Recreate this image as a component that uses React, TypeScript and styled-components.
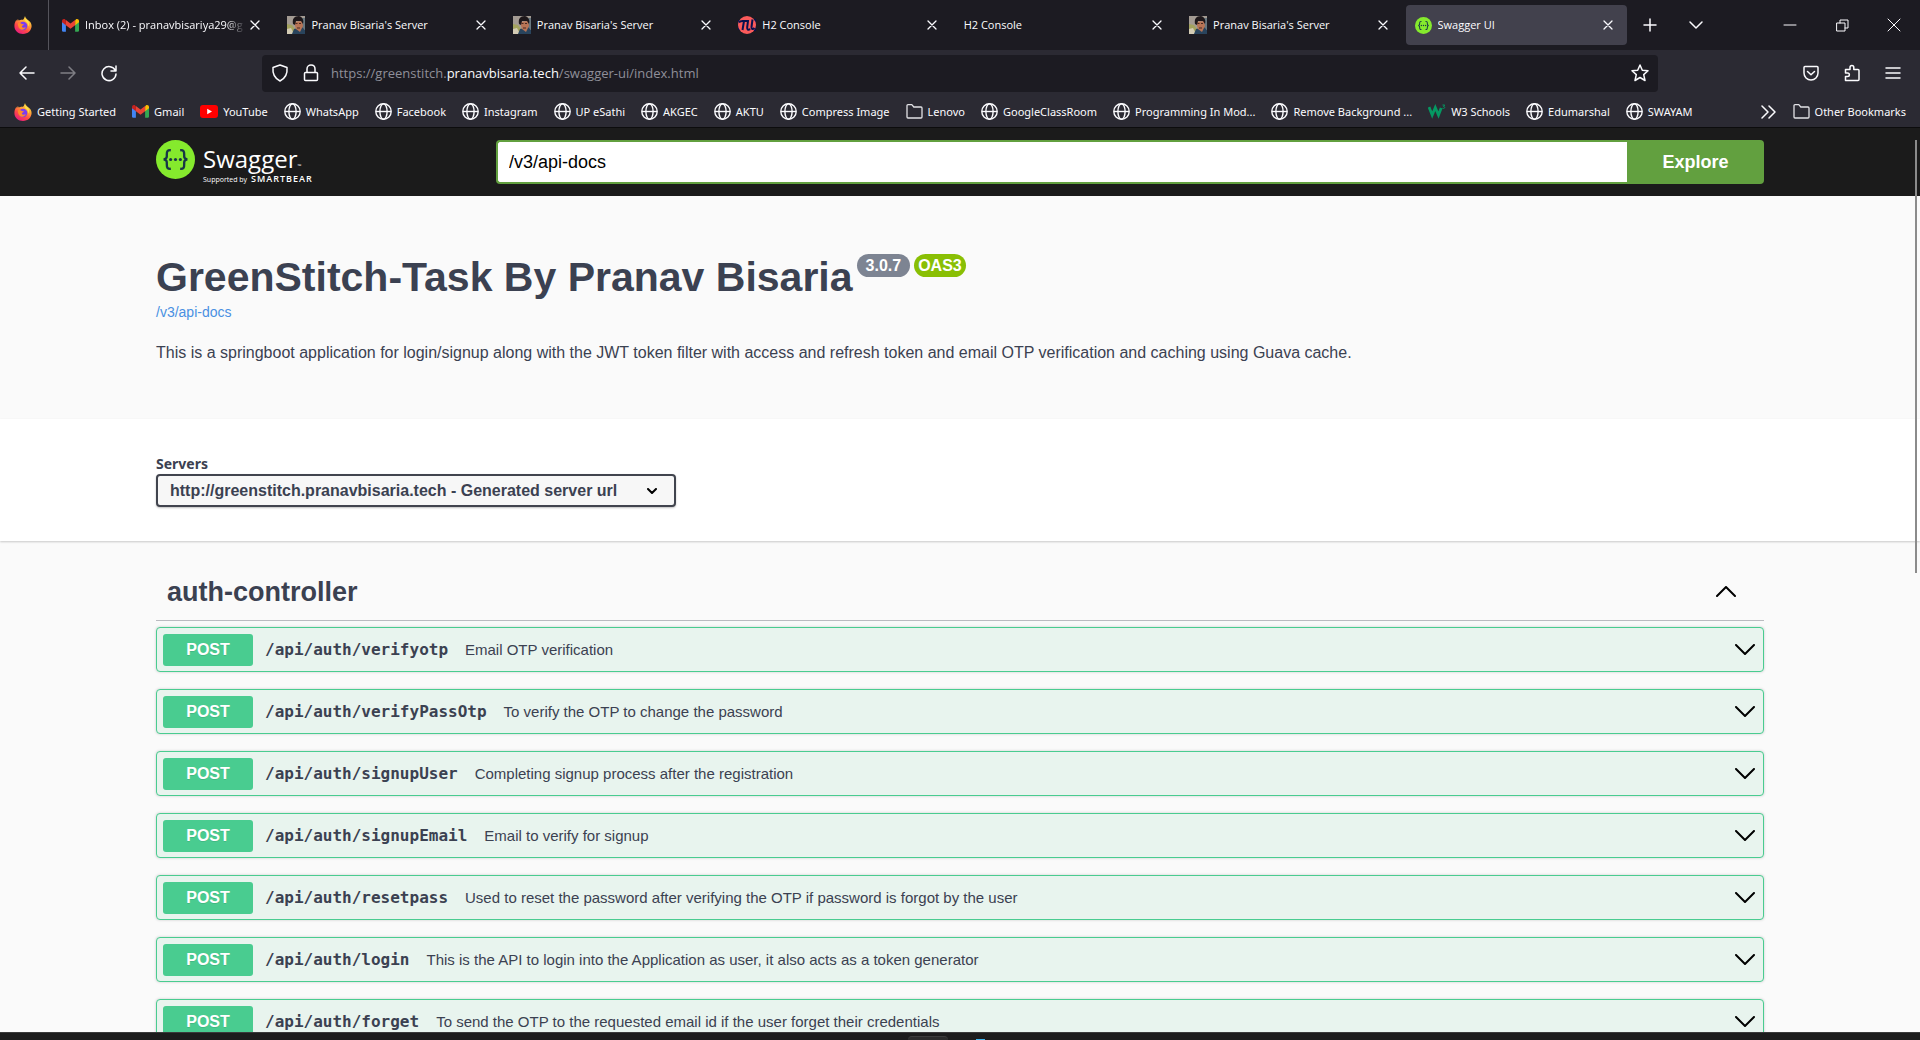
import React from "react";
import styled, { createGlobalStyle, css } from "styled-components";

const uiFont = `"Open Sans", "Noto Sans", sans-serif`;
const bodyFont = `"Liberation Sans", Arial, sans-serif`;

const GlobalStyle = createGlobalStyle`
  *, *::before, *::after { box-sizing: border-box; }
  body { margin: 0; background: #1c1c1c; font-family: ${bodyFont}; color: #3b4151; }
  button { border: 0; padding: 0; background: none; color: inherit; font: inherit; cursor: pointer; }
  h1, h2, p { margin: 0; }
  a { text-decoration: none; color: inherit; }
  svg { display: block; flex: none; }
`;

const Window = styled.div`
  display: flex;
  flex-direction: column;
  height: 100vh;
  overflow: hidden;
`;

/* ---------- browser chrome ---------- */

const Chrome = styled.header`
  flex: none;
  background: #2b2a33;
  color: #fbfbfe;
  font-family: ${uiFont};
  font-size: 11px;
  line-height: 18px;
  border-bottom: 1px solid #0c0c0d;
`;

const TabBar = styled.div`
  display: flex;
  height: 50px;
  background: #1c1b22;
`;

const PinnedTab = styled.button`
  display: flex;
  align-items: center;
  width: 49px;
  padding-left: 14px;
  border-right: 1px solid #55545c;
`;

const TabStrip = styled.div`
  display: flex;
  flex: 0 1 1578px;
  gap: 4px;
  padding: 5px 0 5px 4px;
  min-width: 0;
`;

const Tab = styled.div<{ $active?: boolean }>`
  display: flex;
  align-items: center;
  flex: 1 1 0;
  min-width: 0;
  padding: 0 10px 0 9px;
  border-radius: 4px;
  background: ${(p) => (p.$active ? "#42414d" : "transparent")};

  & > svg {
    margin-right: 6px;
  }
`;

const TabTitle = styled.span<{ $fade?: boolean }>`
  flex: 1;
  min-width: 0;
  overflow: hidden;
  white-space: nowrap;
  ${(p) =>
    p.$fade &&
    css`
      mask-image: linear-gradient(to left, transparent, #000 20px);
    `}
`;

const IconButton = styled.button<{ $size?: number; $dim?: boolean }>`
  display: grid;
  place-items: center;
  flex: none;
  width: ${(p) => p.$size ?? 41}px;
  height: 36px;
  opacity: ${(p) => (p.$dim ? 0.4 : 1)};
`;

const TabActions = styled.div`
  display: flex;
  align-items: center;
`;

const WindowControls = styled.div`
  display: flex;
  align-items: center;
  margin-left: auto;
`;

const NavBar = styled.div`
  display: flex;
  align-items: center;
  height: 46px;
  padding: 0 7px 0 6px;
`;

const AddressBar = styled.div`
  display: flex;
  align-items: center;
  flex: 0 1 1396px;
  height: 37px;
  margin-left: 133px;
  padding: 0 8px;
  border-radius: 4px;
  background: #1c1b22;
`;

const Url = styled.p`
  flex: 1;
  font-size: 13px;
  color: #8f8f99;
  white-space: nowrap;
`;

const UrlHost = styled.span`
  color: #fbfbfe;
`;

const NavTools = styled.div`
  display: flex;
  margin-left: auto;
`;

const Bookmarks = styled.nav`
  display: flex;
  align-items: center;
  height: 31px;
  padding: 0 14px;
  gap: 16px;
  font-family: "Noto Sans", sans-serif;
  white-space: nowrap;
`;

const Bookmark = styled.a`
  display: flex;
  align-items: center;
  gap: 5px;
`;

const BookmarkEnd = styled.div`
  display: flex;
  align-items: center;
  gap: 16px;
  margin-left: auto;
`;

/* ---------- swagger page ---------- */

const Page = styled.main`
  position: relative;
  flex: 1;
  min-height: 0;
  overflow: hidden;
  background: #fafafa;
`;

const ScrollThumb = styled.div`
  position: absolute;
  top: 12px;
  right: 3px;
  width: 2px;
  height: 433px;
  background: #8b8b8b;
`;

const Wrapper = styled.div`
  max-width: 1648px;
  margin: 0 auto;
  padding: 0 20px;
`;

const TopBar = styled.div`
  padding: 12px 0;
  background: #1b1b1b;
`;

const TopBarRow = styled.div`
  display: flex;
  align-items: center;
`;

const Logo = styled.a`
  display: flex;
  align-items: flex-start;
  gap: 8px;
  width: 340px;
  height: 44px;
  color: #fff;
  font-family: ${uiFont};
`;

const LogoText = styled.span`
  display: flex;
  flex-direction: column;
  padding-top: 5px;
`;

const LogoName = styled.span`
  font-size: 24px;
  line-height: 28px;
`;

const LogoMark = styled.small`
  font-size: 5px;
  line-height: 0;
`;

const LogoSupport = styled.span`
  display: flex;
  align-items: baseline;
  gap: 4px;
  font-size: 7px;
  line-height: 12px;
`;

const LogoCompany = styled.strong`
  font-size: 9px;
  font-weight: 600;
  letter-spacing: 1px;
`;

const SearchForm = styled.form`
  display: flex;
  flex: 1;
  height: 44px;
`;

const SearchInput = styled.input`
  flex: 1;
  min-width: 0;
  padding: 0 11px;
  border: 2px solid #62a03f;
  border-right: 0;
  border-radius: 4px 0 0 4px;
  background: #fff;
  color: #000;
  font-family: ${bodyFont};
  font-size: 18px;
  outline: none;
`;

const ExploreButton = styled.button`
  width: 137px;
  border-radius: 0 4px 4px 0;
  background: #62a03f;
  color: #fff;
  font-size: 18px;
  font-weight: 700;
`;

const Info = styled.section`
  padding: 55px 0 56px;
`;

const TitleRow = styled.div`
  display: flex;
  align-items: flex-start;
  gap: 4px;
`;

const Title = styled.h1`
  font-size: 41px;
  line-height: 52px;
  font-weight: 700;
`;

const Version = styled.span<{ $oas?: boolean }>`
  margin-top: 3px;
  padding: 0 ${(p) => (p.$oas ? 4 : 9)}px;
  border-radius: 12px;
  background: ${(p) => (p.$oas ? "#89bf04" : "#7d8492")};
  color: #fff;
  font-size: 16px;
  line-height: 23px;
  font-weight: 700;
`;

const SpecLink = styled.a`
  display: inline-block;
  color: #4990e2;
  font-size: 14px;
  line-height: 18px;
`;

const Description = styled.p`
  margin-top: 22px;
  font-size: 16px;
  line-height: 20px;
`;

const SchemeBar = styled.section`
  padding: 36px 0 34px;
  background: #fff;
  box-shadow: 0 1px 2px rgba(0, 0, 0, 0.2);
`;

const ServerLabel = styled.label`
  display: block;
  font-family: "Noto Sans", sans-serif;
  font-size: 14px;
  line-height: 18px;
  font-weight: 700;
`;

const SelectBox = styled.div`
  display: grid;
  align-items: center;
  max-width: 520px;
  margin-top: 1px;
  color: #000;

  & > * {
    grid-area: 1 / 1;
  }

  & > svg {
    justify-self: end;
    margin-right: 19px;
    pointer-events: none;
  }
`;

const ServerSelect = styled.select`
  appearance: none;
  width: 100%;
  height: 33px;
  padding: 0 40px 0 12px;
  border: 2px solid #41444e;
  border-radius: 4px;
  background: #f7f7f7;
  box-shadow: 0 1px 2px rgba(0, 0, 0, 0.25);
  color: #3b4151;
  font-family: ${bodyFont};
  font-size: 16px;
  font-weight: 700;
`;

const TagSection = styled.section`
  padding-top: 22px;
`;

const TagHeader = styled.div`
  display: flex;
  align-items: center;
  justify-content: space-between;
  height: 58px;
  padding: 0 18px 0 11px;
  border-bottom: 1px solid #babbc0;
  color: #000;
`;

const TagTitle = styled.h2`
  color: #3b4151;
  font-size: 27px;
  line-height: 32px;
  font-weight: 700;
`;

const OperationList = styled.div`
  display: flex;
  flex-direction: column;
  gap: 17px;
  padding-top: 6px;
`;

const Operation = styled.button`
  display: flex;
  align-items: center;
  width: 100%;
  height: 45px;
  padding: 0 8px 0 6px;
  border: 1px solid #49cc90;
  border-radius: 4px;
  background: #e8f4ee;
  box-shadow: 0 0 3px rgba(0, 0, 0, 0.19);
  color: #000;
  text-align: left;
`;

const Method = styled.span`
  width: 90px;
  border-radius: 3px;
  background: #49cc90;
  color: #fff;
  font-size: 16px;
  line-height: 32px;
  font-weight: 700;
  text-align: center;
  text-shadow: 0 1px 0 rgba(0, 0, 0, 0.1);
`;

const Path = styled.code`
  padding: 0 17px 0 12px;
  color: #3b4151;
  font-family: "DejaVu Sans Mono", monospace;
  font-size: 16px;
  font-weight: 700;
`;

const Summary = styled.span`
  flex: 1;
  color: #3b4151;
  font-size: 15px;
`;

const TaskBar = styled.footer`
  display: flex;
  justify-content: center;
  align-items: flex-end;
  flex: none;
  height: 8px;
  padding-right: 28px;
  gap: 28px;
  border-top: 1px solid #3a3a3a;
  background: #1c1c1c;
  overflow: hidden;
`;

const TaskButton = styled.span`
  width: 40px;
  height: 4px;
  border-top: 1px solid #3c3c3c;
  border-radius: 4px 4px 0 0;
  background: #2b2b2b;
`;

const TaskDot = styled.span`
  width: 9px;
  height: 1px;
  background: #3fb4ec;
`;

/* ---------- drawings ---------- */

const FirefoxIcon = () => (
  <svg width="18" height="18" viewBox="0 0 18 18">
    <defs>
      <linearGradient id="fxBody" x1="0.8" y1="0" x2="0.2" y2="1">
        <stop offset="0" stopColor="#fff44f" />
        <stop offset="0.35" stopColor="#ffa436" />
        <stop offset="0.65" stopColor="#ff4a45" />
        <stop offset="1" stopColor="#e31587" />
      </linearGradient>
    </defs>
    <path
      d="M11 0c.3 1.700 1.400 2.700 2.600 3.800C15.800 5.400 17.600 7 17.600 10c0 4.400-3.800 8-8.600 8S.4 14.500.4 10c0-2.700.9-4.600 2.100-6.200l.4 1.500 1-2.300.8 1.500C6.500 3.600 8.800 4 9.600 3.200 10.200 2.500 10.500 1.300 11 0z"
      fill="url(#fxBody)"
    />
    <circle cx="9.100" cy="10" r="4.200" fill="#7b3cf0" />
    <path d="M4 7.500c1.300-1 2.700-.4 3.800.4l2.100.3c-.2 1.300-1.900 1.200-2.100 2.200.4 1.600 2.700 1.500 4 .6-.7 2.400-3 3.300-5 2.500C4.600 12.600 3.700 10 4 7.500z" fill="#ff8a2a" />
    <path d="M11 5c2.300 1 3.400 3 3 5.500 1.300-1 1.300-4 .2-5.500L11.300 2.800z" fill="#ffe14a" />
  </svg>
);

const GmailIcon = () => (
  <svg width="17" height="17" viewBox="0 0 17 17">
    <path d="M0 4v9.500c0 .8.500 1.200 1.200 1.200h2.700V7z" fill="#4285f4" />
    <path d="M17 4v9.500c0 .8-.5 1.200-1.200 1.200h-2.700V7z" fill="#34a853" />
    <path d="M13.100 3.500V8.300L17 5.300V4c0-1.900-2-2.500-3.200-1.500z" fill="#fbbc04" />
    <path d="M0 4v1.300l3.900 3V3.500l-.7-1C2 1.500 0 2.100 0 4z" fill="#c5221f" />
    <path d="M3.900 8.300V3l4.600 3.500L13.100 3v5.300l-4.600 3.500z" fill="#ea4335" />
  </svg>
);

const YouTubeIcon = () => (
  <svg width="18" height="17" viewBox="0 0 18 17">
    <rect y="2" width="18" height="13" rx="3" fill="#f00" />
    <path d="M7.200 5.700v5.600l4.800-2.800z" fill="#fff" />
  </svg>
);

const GlobeIcon = () => (
  <svg width="17" height="17" viewBox="0 0 17 17" fill="none" stroke="#fbfbfe" strokeWidth="1.400">
    <circle cx="8.500" cy="8.500" r="7.700" />
    <ellipse cx="8.500" cy="8.500" rx="3.600" ry="7.700" />
    <path d="M1 8.500h15" />
  </svg>
);

const FolderIcon = () => (
  <svg width="17" height="17" viewBox="0 0 17 17" fill="none" stroke="#e2e2e6" strokeWidth="1.300" strokeLinejoin="round">
    <path d="M1 14V2.600c0-.6.4-1 1-1h3.800L7.800 4H15c.6 0 1 .4 1 1v9c0 .6-.4 1-1 1H2c-.6 0-1-.4-1-1z" />
  </svg>
);

const W3Icon = () => (
  <svg width="18" height="17" viewBox="0 0 18 17" fill="none" stroke="#059862">
    <path d="M1 4l3.200 8L7.300 4.500 10.500 12l2.700-7" strokeWidth="2.800" />
    <path d="M14.500 2h2.200l-1.200 1.500c2 0 1.600 2.500-1 1.800" strokeWidth="1" />
  </svg>
);

const PhotoIcon = () => (
  <svg width="18" height="18" viewBox="0 0 18 18">
    <rect width="18" height="18" fill="#a39b93" />
    <path d="M0 8l5 1 3 4v5H0z" fill="#a3a35e" />
    <path d="M0 13l4-1 3 6H0z" fill="#d3cbb4" />
    <path d="M5 18l2-5 9-2 2 3v4z" fill="#29445d" />
    <path d="M15 2h3v12l-3-3z" fill="#68777f" />
    <path d="M7 6l8-1 1 5-3 6-4-3z" fill="#b87455" />
    <path d="M6 8c-1-5 1-8 6-8 4 1 5 5 4 8l-2-3-5 0-1 4z" fill="#1d171a" />
    <path d="M8.500 7.500h2M12 7.500h2M10 12h3" stroke="#4a2b24" />
  </svg>
);

const H2Icon = () => (
  <svg width="18" height="18" viewBox="0 0 18 18">
    <path d="M13 3h5v12h-5zM0 4h5v10H0z" fill="#07104f" />
    <circle cx="9" cy="9" r="9" fill="#fb5b5b" />
    <path d="M1 6.500c1-1.600 2.500-1.800 5-1.500L4.500 14M6 5h4L9.200 11c-.3 3 1 3.300 3 2.200" fill="none" stroke="#07104f" strokeWidth="2" />
    <path d="M14.500 3.500L13.500 11c-.3 2.500 1.500 2.500 3 1" fill="none" stroke="#07104f" strokeWidth="2" />
  </svg>
);

const SwaggerMark = ({ size }: { size: number }) => (
  <svg width={size} height={size} viewBox="0 0 40 40">
    <circle cx="20" cy="20" r="20" fill="#85ea2d" />
    <g fill="none" stroke="#173647" strokeWidth="2.400">
      <path d="M15.200 10.500c-3.400-.3-4.200.9-4.100 4.200.1 3 .1 4.600-3.200 5.200 3.300.6 3.300 2.200 3.200 5.200-.1 3.300.7 4.700 4.100 4.400" />
      <path d="M24.800 10.500c3.400-.3 4.200.9 4.100 4.200-.1 3-.1 4.600 3.200 5.200-3.300.6-3.300 2.200-3.200 5.200.1 3.300-.7 4.700-4.100 4.400" />
    </g>
    <g fill="#173647">
      <circle cx="15" cy="20" r="1.600" />
      <circle cx="20" cy="20" r="1.600" />
      <circle cx="25" cy="20" r="1.600" />
    </g>
  </svg>
);

interface LineIconProps {
  d: string;
  width?: number;
  height?: number;
  stroke?: number;
}

const LineIcon = ({ d, width = 18, height = 18, stroke = 1.5 }: LineIconProps) => (
  <svg
    width={width}
    height={height}
    viewBox={`0 0 ${width} ${height}`}
    fill="none"
    stroke="currentColor"
    strokeWidth={stroke}
    strokeLinecap="round"
    strokeLinejoin="round"
  >
    <path d={d} />
  </svg>
);

const paths = {
  close: "M1 1l8 8M9 1l-8 8",
  plus: "M9 3v12M3 9h12",
  down: "M3 6l6 6 6-6",
  minimize: "M3 9h12",
  restore: "M4 7h8v8H4zM7 7V4h8v8h-3",
  windowClose: "M3 3l12 12M15 3L3 15",
  back: "M16 9H2M8 3L2 9l6 6",
  forward: "M2 9h14M10 3l6 6-6 6",
  reload: "M15.300 6.500A7 7 0 1 0 16 10M16 2v5h-5",
  shield: "M9 1l7 2.500c.5 5-1 10.500-7 13.500C3 14 1.500 8.500 2 3.500z",
  lock: "M3.500 8.500h11c.5 0 1 .5 1 1v6c0 .5-.5 1-1 1h-11c-.5 0-1-.5-1-1v-6c0-.5.500-1 1-1zM5 8V5c0-5.300 8-5.300 8 0v3",
  star: "M9 1l2.300 5.200 5.700.6-4.300 3.800 1.300 5.900L9 13.500l-5 3 1.300-5.900L1 6.800l5.700-.6z",
  pocket: "M3 2.500h12c.6 0 1 .4 1 1V9a7 7 0 0 1-14 0V3.500c0-.6.400-1 1-1zM5.500 7.500L9 10.800l3.500-3.300",
  extension: "M2.500 16.500v-4h2c2.500 0 2.500-3.500 0-3.500h-2V5.500H7V3.500c0-2.700 3.800-2.700 3.800 0v2H15c.6 0 1 .4 1 1v9c0 .6-.4 1-1 1z",
  menu: "M2 4h14M2 9h14M2 14h14",
  more: "M1 2l6 6-6 6M8 2l6 6-6 6",
  selectArrow: "M1 1l4 4 4-4",
  expand: "M1 1l9 9 9-9",
  collapse: "M1 10l9-9 9 9",
};

/* ---------- content ---------- */

const tabs = [
  { title: "Inbox (2) - pranavbisariya29@g", icon: <GmailIcon />, fade: true },
  { title: "Pranav Bisaria's Server", icon: <PhotoIcon /> },
  { title: "Pranav Bisaria's Server", icon: <PhotoIcon /> },
  { title: "H2 Console", icon: <H2Icon /> },
  { title: "H2 Console", icon: null },
  { title: "Pranav Bisaria's Server", icon: <PhotoIcon /> },
  { title: "Swagger UI", icon: <SwaggerMark size={17} />, active: true },
];

const bookmarks: [string, React.ReactNode][] = [
  ["Getting Started", <FirefoxIcon />],
  ["Gmail", <GmailIcon />],
  ["YouTube", <YouTubeIcon />],
  ["WhatsApp", <GlobeIcon />],
  ["Facebook", <GlobeIcon />],
  ["Instagram", <GlobeIcon />],
  ["UP eSathi", <GlobeIcon />],
  ["AKGEC", <GlobeIcon />],
  ["AKTU", <GlobeIcon />],
  ["Compress Image", <GlobeIcon />],
  ["Lenovo", <FolderIcon />],
  ["GoogleClassRoom", <GlobeIcon />],
  ["Programming In Mod...", <GlobeIcon />],
  ["Remove Background ...", <GlobeIcon />],
  ["W3 Schools", <W3Icon />],
  ["Edumarshal", <GlobeIcon />],
  ["SWAYAM", <GlobeIcon />],
];

const operations = [
  ["/api/auth/verifyotp", "Email OTP verification"],
  ["/api/auth/verifyPassOtp", "To verify the OTP to change the password"],
  ["/api/auth/signupUser", "Completing signup process after the registration"],
  ["/api/auth/signupEmail", "Email to verify for signup"],
  ["/api/auth/resetpass", "Used to reset the password after verifying the OTP if password is forgot by the user"],
  ["/api/auth/login", "This is the API to login into the Application as user, it also acts as a token generator"],
  ["/api/auth/forget", "To send the OTP to the requested email id if the user forget their credentials"],
];

const BrowserChrome = () => (
  <Chrome>
    <TabBar>
      <PinnedTab aria-label="Firefox View">
        <FirefoxIcon />
      </PinnedTab>
      <TabStrip>
        {tabs.map((tab, i) => (
          <Tab key={i} $active={tab.active}>
            {tab.icon}
            <TabTitle $fade={tab.fade}>{tab.title}</TabTitle>
            <IconButton $size={18} aria-label="Close tab">
              <LineIcon d={paths.close} width={10} height={10} stroke={1.3} />
            </IconButton>
          </Tab>
        ))}
      </TabStrip>
      <TabActions>
        <IconButton $size={46} aria-label="New tab"><LineIcon d={paths.plus} /></IconButton>
        <IconButton $size={46} aria-label="List all tabs"><LineIcon d={paths.down} /></IconButton>
      </TabActions>
      <WindowControls>
        <IconButton $size={52} aria-label="Minimize"><LineIcon d={paths.minimize} stroke={1} /></IconButton>
        <IconButton $size={52} aria-label="Restore"><LineIcon d={paths.restore} stroke={1} /></IconButton>
        <IconButton $size={52} aria-label="Close"><LineIcon d={paths.windowClose} stroke={1} /></IconButton>
      </WindowControls>
    </TabBar>
    <NavBar>
      <IconButton aria-label="Back"><LineIcon d={paths.back} /></IconButton>
      <IconButton $dim aria-label="Forward"><LineIcon d={paths.forward} /></IconButton>
      <IconButton aria-label="Reload"><LineIcon d={paths.reload} /></IconButton>
      <AddressBar>
        <IconButton $size={20} aria-label="Tracking protection"><LineIcon d={paths.shield} /></IconButton>
        <IconButton aria-label="Site information"><LineIcon d={paths.lock} /></IconButton>
        <Url>
          https://greenstitch.<UrlHost>pranavbisaria.tech</UrlHost>/swagger-ui/index.html
        </Url>
        <IconButton $size={20} aria-label="Bookmark this page"><LineIcon d={paths.star} /></IconButton>
      </AddressBar>
      <NavTools>
        <IconButton aria-label="Save to Pocket"><LineIcon d={paths.pocket} /></IconButton>
        <IconButton aria-label="Extensions"><LineIcon d={paths.extension} /></IconButton>
        <IconButton aria-label="Menu"><LineIcon d={paths.menu} /></IconButton>
      </NavTools>
    </NavBar>
    <Bookmarks>
      {bookmarks.map(([name, icon]) => (
        <Bookmark key={name} href="#">
          {icon}
          {name}
        </Bookmark>
      ))}
      <BookmarkEnd>
        <IconButton $size={16} aria-label="More bookmarks">
          <LineIcon d={paths.more} width={15} height={16} />
        </IconButton>
        <Bookmark href="#">
          <FolderIcon />
          Other Bookmarks
        </Bookmark>
      </BookmarkEnd>
    </Bookmarks>
  </Chrome>
);

export default function App() {
  return (
    <Window>
      <GlobalStyle />
      <BrowserChrome />
      <Page>
        <TopBar>
          <Wrapper>
            <TopBarRow>
              <Logo href="#">
                <SwaggerMark size={39} />
                <LogoText>
                  <LogoName>
                    Swagger<LogoMark>™</LogoMark>
                  </LogoName>
                  <LogoSupport>
                    Supported by <LogoCompany>SMARTBEAR</LogoCompany>
                  </LogoSupport>
                </LogoText>
              </Logo>
              <SearchForm onSubmit={(e) => e.preventDefault()}>
                <SearchInput type="text" defaultValue="/v3/api-docs" aria-label="API definition" />
                <ExploreButton type="submit">Explore</ExploreButton>
              </SearchForm>
            </TopBarRow>
          </Wrapper>
        </TopBar>
        <Info>
          <Wrapper>
            <TitleRow>
              <Title>GreenStitch-Task By Pranav Bisaria</Title>
              <Version>3.0.7</Version>
              <Version $oas>OAS3</Version>
            </TitleRow>
            <SpecLink href="#">/v3/api-docs</SpecLink>
            <Description>
              This is a springboot application for login/signup along with the JWT token filter with access and refresh
              token and email OTP verification and caching using Guava cache.
            </Description>
          </Wrapper>
        </Info>
        <SchemeBar>
          <Wrapper>
            <ServerLabel htmlFor="servers">Servers</ServerLabel>
            <SelectBox>
              <ServerSelect id="servers">
                <option>http://greenstitch.pranavbisaria.tech - Generated server url</option>
              </ServerSelect>
              <LineIcon d={paths.selectArrow} width={10} height={6} stroke={2} />
            </SelectBox>
          </Wrapper>
        </SchemeBar>
        <Wrapper>
          <TagSection>
            <TagHeader>
              <TagTitle>auth-controller</TagTitle>
              <IconButton aria-label="Collapse operations">
                <LineIcon d={paths.collapse} width={20} height={11} stroke={2} />
              </IconButton>
            </TagHeader>
            <OperationList>
              {operations.map(([path, summary]) => (
                <Operation key={path}>
                  <Method>POST</Method>
                  <Path>{path}</Path>
                  <Summary>{summary}</Summary>
                  <LineIcon d={paths.expand} width={20} height={11} stroke={2} />
                </Operation>
              ))}
            </OperationList>
          </TagSection>
        </Wrapper>
        <ScrollThumb />
      </Page>
      <TaskBar>
        <TaskButton />
        <TaskDot />
      </TaskBar>
    </Window>
  );
}
